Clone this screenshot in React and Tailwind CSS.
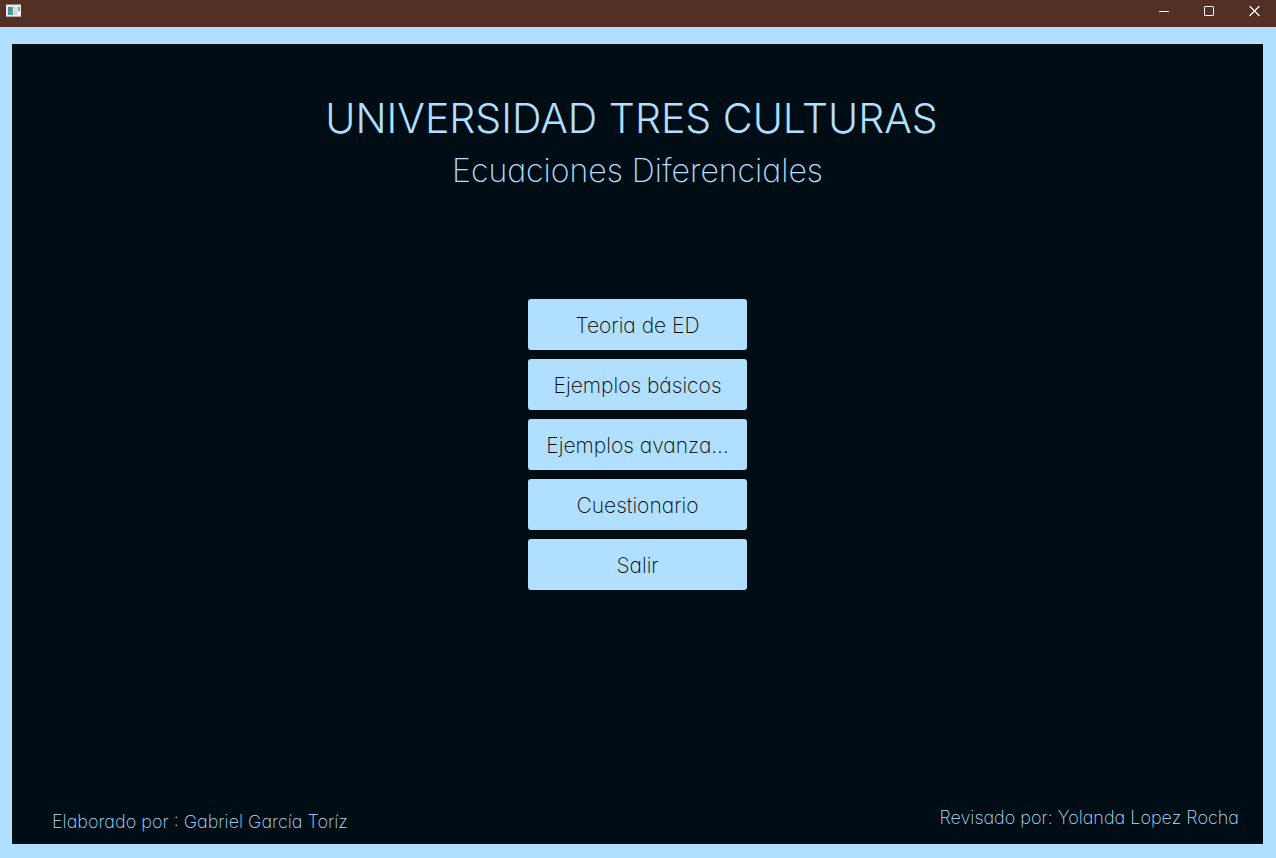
import React from "react";

const menu = [
  "Teoria de ED",
  "Ejemplos básicos",
  "Ejemplos avanza...",
  "Cuestionario",
  "Salir",
];

function TitleBar() {
  return (
    <header className="flex h-[27px] shrink-0 items-start justify-between bg-[#533023]">
      <svg className="mt-1 ml-1.5 h-[14px] w-[15px]" viewBox="0 0 15 14" aria-hidden="true">
        <defs>
          <linearGradient id="pane" x1="0" y1="0" x2="1" y2="1">
            <stop offset="0" stopColor="#4c83ad" />
            <stop offset="1" stopColor="#4ca777" />
          </linearGradient>
        </defs>
        <rect width="15" height="13" fill="#e9e9ee" />
        <rect width="15" height="1" fill="#8f8b91" />
        <rect y="12" width="15" height="1" fill="#b2abb0" />
        <rect x="2" y="3" width="5" height="8" fill="url(#pane)" />
        <rect x="8" y="3" width="3" height="8" fill="#d5d5dc" />
        <rect x="12" y="3" width="2" height="4" fill="#7ab0ab" />
        <rect x="12" y="8" width="2" height="3" fill="#ffffff" />
      </svg>
      <div className="flex text-white">
        <button type="button" aria-label="Minimizar" className="flex h-[22px] w-[45px] items-center justify-center pl-0.5">
          <svg width="11" height="11" viewBox="0 0 11 11" fill="none" stroke="currentColor">
            <path d="M0 5.5h10" />
          </svg>
        </button>
        <button type="button" aria-label="Maximizar" className="flex h-[22px] w-[45px] items-center justify-center pl-0.5">
          <svg width="11" height="11" viewBox="0 0 11 11" fill="none" stroke="currentColor">
            <rect x="0.5" y="0.5" width="9" height="9" rx="0.5" />
          </svg>
        </button>
        <button type="button" aria-label="Cerrar" className="flex h-[22px] w-[45px] items-center justify-center pl-0.5">
          <svg width="11" height="11" viewBox="0 0 11 11" fill="none" stroke="currentColor" strokeWidth="1.2">
            <path d="M0.5 0l10 10M10.5 0l-10 10" />
          </svg>
        </button>
      </div>
    </header>
  );
}

export default function App() {
  return (
    <div className="flex min-h-screen flex-col bg-[#b0dfff] font-['Inter',sans-serif] font-extralight [font-feature-settings:'cv11']">
      <TitleBar />
      <main className="flex flex-1 flex-col bg-[#b0dfff] pt-[17px] pr-[13px] pb-[14px] pl-3">
        <div className="flex flex-1 flex-col items-center bg-[#000d14] pt-[46px] text-[#b0dfff]">
          <h1 className="pr-3 text-center text-[41px] leading-[56px] font-light">UNIVERSIDAD TRES CULTURAS</h1>
          <h2 className="text-center text-[32px] leading-[50px] font-extralight">Ecuaciones Diferenciales</h2>
          <nav className="mt-[103px] flex w-[219px] flex-col gap-[9px]">
            {menu.map((label) => (
              <button
                key={label}
                type="button"
                className="h-[51px] rounded-[3px] bg-[#b0dfff] pt-0.5 text-center text-[21px] whitespace-nowrap text-black"
              >
                {label}
              </button>
            ))}
          </nav>
          <footer className="mt-auto flex w-full items-end justify-between pr-6 pb-2 pl-10 text-[18px] leading-7">
            <p>Elaborado por : Gabriel García Toríz</p>
            <p className="pb-1">Revisado por: Yolanda Lopez Rocha</p>
          </footer>
        </div>
      </main>
    </div>
  );
}
